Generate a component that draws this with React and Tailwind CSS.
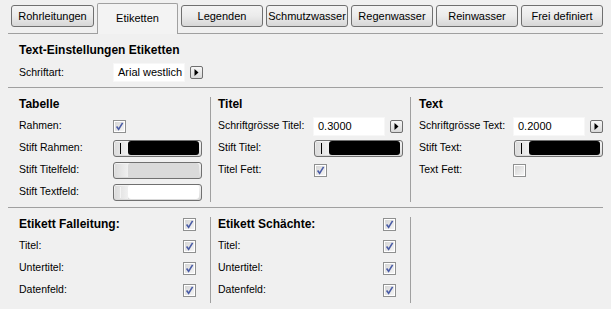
import React from "react";

const tabs = [
  { label: "Rohrleitungen", w: "w-[83px]" },
  { label: "Etiketten", w: "w-[81px]", active: true },
  { label: "Legenden", w: "w-[82px]" },
  { label: "Schmutzwasser", w: "w-[82px]" },
  { label: "Regenwasser", w: "w-[82px]" },
  { label: "Reinwasser", w: "w-[82px]" },
  { label: "Frei definiert", w: "w-[82px]" },
];

function Check({ checked }) {
  return (
    <span className="flex h-[13px] w-[13px] items-center justify-center border border-[#8f9090] bg-[#f4f4f4]">
      <span className="flex h-[11px] w-[11px] items-center justify-center border border-[#ffffff] bg-linear-to-br from-[#d6d6d6] to-[#f5f5f5]">
        {checked && (
          <svg width="9" height="9" viewBox="0 0 9 9">
            <path d="M1.6 4.6 L3.6 7.3 L7.6 0.8" stroke="#4a5ca6" strokeWidth="1.6" fill="none" />
          </svg>
        )}
      </span>
    </span>
  );
}

function ArrowBtn() {
  return (
    <span className="flex h-[13px] w-[13px] items-center justify-center rounded-[2px] border border-[#6f6f6f] bg-linear-to-b from-[#f7f7f7] to-[#d9d9d9]">
      <svg width="5" height="7" viewBox="0 0 5 7">
        <path d="M0.5 0 L4.5 3.5 L0.5 7 Z" fill="#000" />
      </svg>
    </span>
  );
}

function TextInput({ value }) {
  return (
    <span className="flex h-[19px] w-[72px] items-center border border-[#f7f7f7] bg-white pl-[4px] text-[11px] text-black">
      {value}
    </span>
  );
}

function PenBox({ color, line }) {
  return (
    <span className="flex h-[17px] w-[89px] items-center rounded-[3px] border border-[#707070] bg-linear-to-b from-[#f4f4f4] via-[#e9e9e9] to-[#d8d8d8] pl-[1px] pr-[2px]">
      <span className="flex h-[13px] w-[13px] items-center bg-linear-to-r from-[#dcdcdc] to-[#f0f0f0] pl-[5px]">
        <span className={`h-[11px] w-px ${line}`} />
      </span>
      <span className={`h-[14px] flex-1 rounded-[3px] ${color}`} />
    </span>
  );
}

function Row({ label, labelW = "w-[94px]", children, bold }) {
  return (
    <div className="flex h-[22px] items-center">
      <span
        className={`${labelW} shrink-0 whitespace-nowrap ${bold ? "text-[12px] font-bold" : "text-[10.5px]"} text-black`}
      >
        {label}
      </span>
      {children}
    </div>
  );
}

function Header({ children }) {
  return (
    <div className="flex h-[22px] items-center text-[12px] font-bold text-black">{children}</div>
  );
}

export default function App() {
  return (
    <div
      className="h-[309px] w-[611px] overflow-hidden bg-[#f0f0f0] px-[8px] text-black"
      style={{ fontFamily: '"Liberation Sans", Arial, sans-serif' }}
    >
      {/* tab strip */}
      <div className="flex h-[34px] items-start gap-[3px] border-b border-[#a0a0a0] pl-[3px] pt-[3px]">
        {tabs.map((t) =>
          t.active ? (
            <div
              key={t.label}
              className={`${t.w} flex h-[31px] shrink-0 justify-center rounded-t-[2px] border border-b-0 border-[#a0a0a0] bg-[#f3f3f3] pt-[6px] text-[11px]`}
            >
              {t.label}
            </div>
          ) : (
            <div
              key={t.label}
              className={`${t.w} mt-[2px] flex h-[22px] shrink-0 items-center justify-center rounded-[3px] border border-[#707070] bg-linear-to-b from-[#f4f4f4] via-[#ebebeb] to-[#d7d7d7] text-[11px]`}
            >
              {t.label}
            </div>
          )
        )}
      </div>

      {/* text settings */}
      <div className="border-b border-[#a0a0a0] pb-[5px] pl-[11px] pt-[9px]">
        <div className="h-[14px] text-[12px] font-bold leading-[14px]">Text-Einstellungen Etiketten</div>
        <div className="mt-[6px] flex h-[19px] items-center">
          <span className="w-[94px] text-[10.5px]">Schriftart:</span>
          <TextInput value="Arial westlich" />
          <span className="ml-[5px]">
            <ArrowBtn />
          </span>
        </div>
      </div>

      {/* table / title / text */}
      <div className="flex border-b border-[#a0a0a0] pb-[4px] pt-[5px]">
        <div className="w-[202px] shrink-0 pl-[11px]">
          <Header>Tabelle</Header>
          <Row label="Rahmen:">
            <Check checked />
          </Row>
          <Row label="Stift Rahmen:">
            <PenBox color="bg-black" line="bg-black" />
          </Row>
          <Row label="Stift Titelfeld:">
            <PenBox color="bg-[#dadada]" line="bg-[#e4e4e4]" />
          </Row>
          <Row label="Stift Textfeld:">
            <PenBox color="bg-white" line="bg-[#f4f4f4]" />
          </Row>
        </div>
        <div className="mb-[1px] mt-[4px] w-px shrink-0 bg-[#a0a0a0]" />
        <div className="w-[199px] shrink-0 pl-[7px]">
          <Header>Titel</Header>
          <Row label="Schriftgrösse Titel:" labelW="w-[95px]">
            <TextInput value="0.3000" />
            <span className="ml-[5px]">
              <ArrowBtn />
            </span>
          </Row>
          <Row label="Stift Titel:" labelW="w-[96px]">
            <PenBox color="bg-black" line="bg-black" />
          </Row>
          <Row label="Titel Fett:" labelW="w-[96px]">
            <Check checked />
          </Row>
        </div>
        <div className="mb-[1px] mt-[4px] w-px shrink-0 bg-[#a0a0a0]" />
        <div className="flex-1 pl-[8px]">
          <Header>Text</Header>
          <Row label="Schriftgrösse Text:">
            <TextInput value="0.2000" />
            <span className="ml-[5px]">
              <ArrowBtn />
            </span>
          </Row>
          <Row label="Stift Text:" labelW="w-[95px]">
            <PenBox color="bg-black" line="bg-black" />
          </Row>
          <Row label="Text Fett:">
            <Check />
          </Row>
        </div>
      </div>

      {/* label options */}
      <div className="flex pt-[5px]">
        <div className="w-[202px] shrink-0 pl-[11px]">
          <Row label="Etikett Falleitung:" labelW="w-[164px]" bold>
            <Check checked />
          </Row>
          <Row label="Titel:" labelW="w-[164px]">
            <Check checked />
          </Row>
          <Row label="Untertitel:" labelW="w-[164px]">
            <Check checked />
          </Row>
          <Row label="Datenfeld:" labelW="w-[164px]">
            <Check checked />
          </Row>
        </div>
        <div className="mb-[-2px] mt-[4px] w-px shrink-0 bg-[#a0a0a0]" />
        <div className="w-[199px] shrink-0 pl-[7px]">
          <Row label="Etikett Schächte:" labelW="w-[165px]" bold>
            <Check checked />
          </Row>
          <Row label="Titel:" labelW="w-[165px]">
            <Check checked />
          </Row>
          <Row label="Untertitel:" labelW="w-[165px]">
            <Check checked />
          </Row>
          <Row label="Datenfeld:" labelW="w-[165px]">
            <Check checked />
          </Row>
        </div>
        <div className="mb-[-2px] mt-[4px] w-px shrink-0 bg-[#a0a0a0]" />
        <div className="flex-1" />
      </div>
    </div>
  );
}
